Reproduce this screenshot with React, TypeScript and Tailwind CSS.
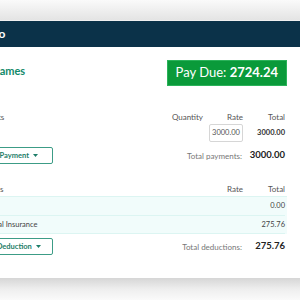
import React from 'react';

const Caret = () => (
  <svg width="5" height="3" viewBox="0 0 5 3" className="ml-[4px]">
    <path d="M0 0h5L2.5 3z" fill="currentColor" />
  </svg>
);

const AddButton = ({ label }: { label: string }) => (
  <button className="h-[17px] w-[84px] ml-[-1px] border border-[#3c9c86] rounded-[2px] bg-white flex items-center justify-center text-[7.5px] font-bold text-[#1d7d68]">
    {label}
    <Caret />
  </button>
);

const App: React.FC = () => {
  return (
    <div
      className="w-[300px] h-[300px] overflow-hidden bg-white flex flex-col"
      style={{ fontFamily: 'Lato, "Open Sans", sans-serif' }}
    >
      {/* top shade */}
      <div className="h-[20px] shrink-0 bg-gradient-to-b from-[#fafafa] to-[#e4e4e4]" />
      <div className="h-[1px] shrink-0 bg-[#f0f0f0]" />

      {/* Navy header */}
      <div className="h-[26px] shrink-0 bg-[#0b3249] flex items-center ml-[-27px] w-[327px]">
        <span className="text-white text-[12px] font-bold">Demo</span>
      </div>

      {/* Card content */}
      <div className="h-[231px] shrink-0 w-[330px] ml-[-30px] pr-[15px] flex flex-col bg-white">
        <div className="flex justify-between items-start mt-[13px]">
          <h1 className="text-[11px] font-bold text-[#138a6a] pt-[3px] ml-[2px]">Tom James</h1>
          <div className="h-[26px] mr-[-2px] px-[8px] bg-[#0a9a3a] border border-[#2bb25a] flex items-center text-white text-[13px]">
            Pay Due:&nbsp;<span className="font-bold">2724.24</span>
          </div>
        </div>

        {/* Payments */}
        <div className="grid grid-cols-[1fr_40px_40px_42px] items-center mt-[25px] h-[10px] text-[8px] text-[#555]">
          <span>Payments</span>
          <span className="text-right">Quantity</span>
          <span className="text-right">Rate</span>
          <span className="text-right">Total</span>
        </div>
        <div className="grid grid-cols-[1fr_40px_40px_42px] items-center h-[20px] mt-[2px]">
          <span className="pl-[6px] text-[8px] text-[#444]">Salary</span>
          <span />
          <span className="flex justify-end">
            <span className="w-[34px] h-[18px] border border-[#d6d6d6] rounded-[2px] flex items-center justify-center text-[7.5px] text-[#555]">
              3000.00
            </span>
          </span>
          <span className="text-right text-[7.5px] font-bold text-[#333]">3000.00</span>
        </div>
        <div className="grid grid-cols-[1fr_80px_42px] items-center mt-[4px] h-[17px]">
          <AddButton label="Add Payment" />
          <span className="text-right text-[8px] text-[#777] pr-[1px]">Total payments:</span>
          <span className="text-right text-[9.5px] font-bold text-[#222]">3000.00</span>
        </div>

        {/* Deductions */}
        <div className="grid grid-cols-[1fr_40px_42px] items-center mt-[19px] h-[10px] text-[8px] text-[#555]">
          <span className="ml-[-7px]">Deductions</span>
          <span className="text-right">Rate</span>
          <span className="text-right">Total</span>
        </div>
        <div className="mt-[3px] mr-[-2px] pr-[2px] bg-[#f1fcfb] border-t border-[#dcf5f2]">
          <div className="grid grid-cols-[1fr_40px_42px] items-center h-[19px] border-b border-[#dcf5f2] text-[7.5px] text-[#444]">
            <span className="pl-[6px]">Tax</span>
            <span />
            <span className="text-right">0.00</span>
          </div>
          <div className="grid grid-cols-[1fr_40px_42px] items-center h-[18px] border-b border-[#dcf5f2] text-[7.5px] text-[#444]">
            <span className="pl-[6px]">National Insurance</span>
            <span />
            <span className="text-right">275.76</span>
          </div>
        </div>
        <div className="grid grid-cols-[1fr_80px_42px] items-center mt-[4px] h-[17px]">
          <AddButton label="Add Deduction" />
          <span className="text-right text-[8px] text-[#777] pr-[1px]">Total deductions:</span>
          <span className="text-right text-[9.5px] font-bold text-[#222]">275.76</span>
        </div>
      </div>

      {/* bottom shadow */}
      <div className="flex-1 bg-gradient-to-b from-[#d6d6d6] via-[#eeeeee] to-[#fafafa]" />
    </div>
  );
};

export default App;
